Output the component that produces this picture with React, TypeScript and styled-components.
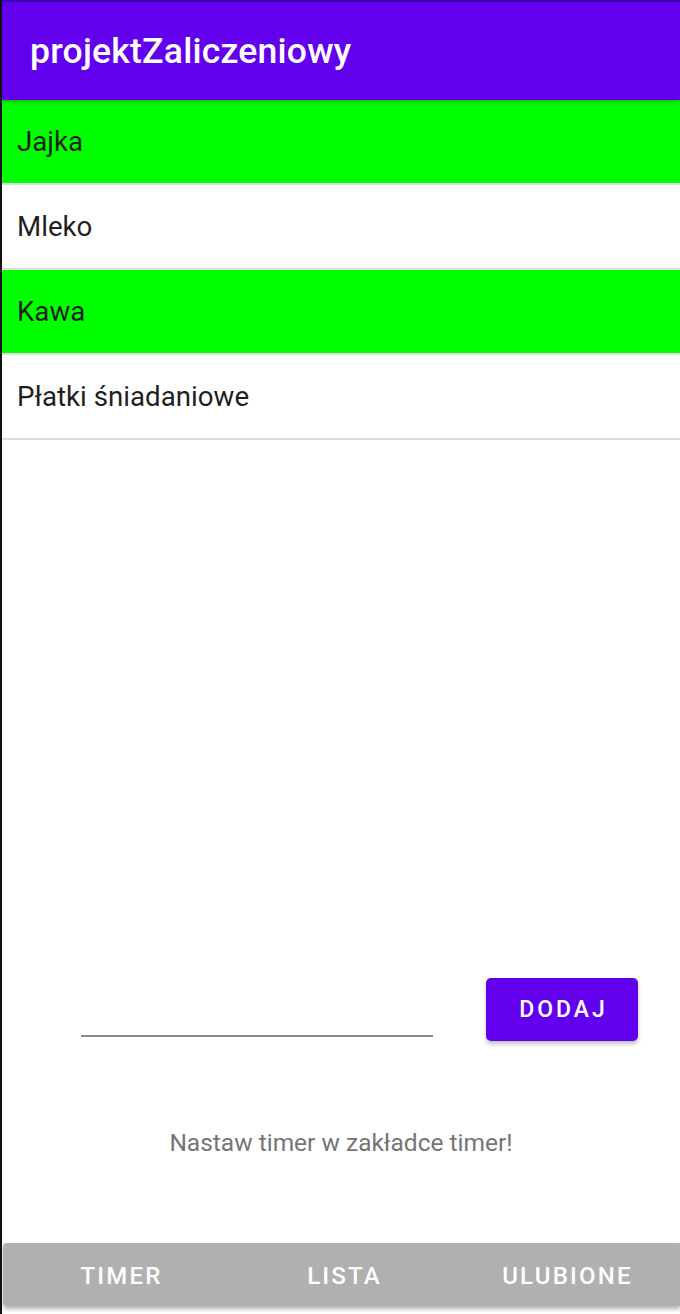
import React from "react";
import styled, { createGlobalStyle } from "styled-components";

const Global = createGlobalStyle`
  html, body { margin: 0; padding: 0; background: #fff; }
  body { font-family: Roboto, "Noto Sans", sans-serif; }
`;

const Screen = styled.div`
  width: 680px;
  height: 1314px;
  box-sizing: border-box;
  border-left: 2px solid #111;
  display: flex;
  flex-direction: column;
  background: #fff;
  overflow: hidden;
  position: relative;
`;

const AppBar = styled.header`
  height: 98px;
  border-top: 2px solid #3f00b0;
  background: #6200ee;
  display: flex;
  align-items: center;
  padding-left: 28px;
  box-shadow: 0 2px 4px rgba(0, 0, 0, 0.25);
  position: relative;
  z-index: 1;
`;

const Title = styled.h1`
  margin: 0;
  color: #fff;
  font-family: Roboto, sans-serif;
  font-weight: 500;
  font-size: 35.6px;
  letter-spacing: 0.2px;
`;

const List = styled.ul`
  margin: 0;
  padding: 0;
  list-style: none;
`;

const Item = styled.li<{ $done: boolean }>`
  height: 83px;
  border-bottom: 2px solid #dedede;
  background: ${(p) => (p.$done ? "#00ff00" : "#fff")};
  display: flex;
  align-items: center;
  padding-left: 15px;
  font-size: 27.7px;
  color: #1f1f1f;
`;

const Spacer = styled.div`
  flex: 1;
`;

const AddRow = styled.div`
  display: flex;
  align-items: center;
  padding: 0 40px 0 79px;
  height: 64px;
  gap: 53px;
`;

const Field = styled.div`
  flex: 0 0 352px;
  height: 64px;
  box-sizing: border-box;
  border-bottom: 2px solid #8a8a8a;
  margin-top: -8px;
`;

const AddButton = styled.button`
  width: 152px;
  height: 63px;
  border: none;
  border-radius: 5px;
  background: #6200ee;
  color: #fff;
  font-family: Roboto, sans-serif;
  font-weight: 500;
  font-size: 23px;
  letter-spacing: 3px;
  padding: 0 0 0 3px;
  box-shadow: 0 3px 4px rgba(0, 0, 0, 0.25);
`;

const Hint = styled.p`
  margin: 82px 0 0;
  text-align: center;
  color: #757575;
  font-size: 24.5px;
  height: 40px;
  line-height: 40px;
`;

const BottomNav = styled.nav`
  margin: 80px 0 8px 1px;
  padding: 0 1px 0 7px;
  height: 63px;
  background: #b0b0b0;
  border-radius: 4px 0 0 4px;
  display: grid;
  grid-template-columns: repeat(3, 1fr);
  box-shadow: 0 3px 4px rgba(0, 0, 0, 0.3);
`;

const Tab = styled.div`
  display: flex;
  align-items: center;
  justify-content: center;
  padding-top: 3px;
  color: #fff;
  font-family: Roboto, sans-serif;
  font-weight: 500;
  font-size: 24px;
  letter-spacing: 2.2px;
`;

const items = [
  { name: "Jajka", done: true },
  { name: "Mleko", done: false },
  { name: "Kawa", done: true },
  { name: "Płatki śniadaniowe", done: false },
];

export default function App() {
  return (
    <>
      <Global />
      <Screen>
        <AppBar>
          <Title>projektZaliczeniowy</Title>
        </AppBar>
        <List>
          {items.map((it) => (
            <Item key={it.name} $done={it.done}>
              {it.name}
            </Item>
          ))}
        </List>
        <Spacer />
        <AddRow>
          <Field />
          <AddButton>DODAJ</AddButton>
        </AddRow>
        <Hint>Nastaw timer w zakładce timer!</Hint>
        <BottomNav>
          <Tab>TIMER</Tab>
          <Tab>LISTA</Tab>
          <Tab>ULUBIONE</Tab>
        </BottomNav>
      </Screen>
    </>
  );
}
